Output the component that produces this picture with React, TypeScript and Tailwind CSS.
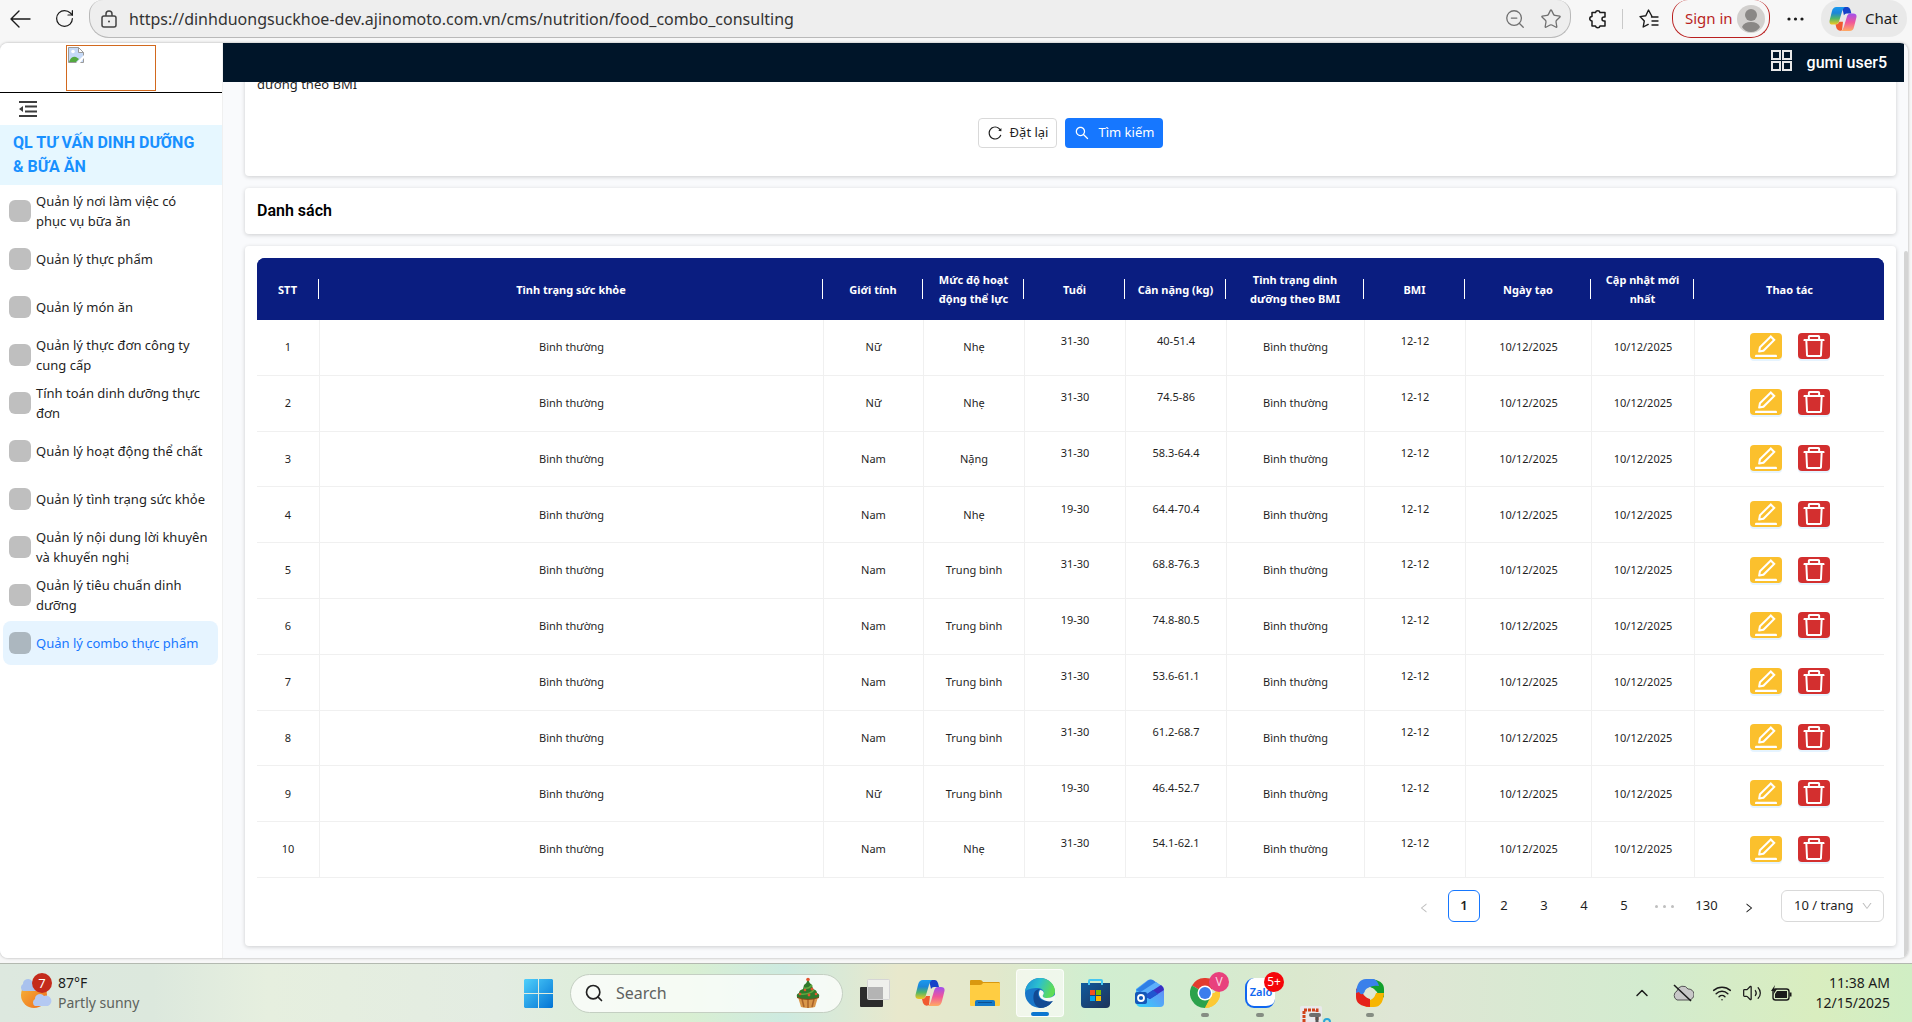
import { useState } from "react";
import type { ReactNode } from "react";
import {
  AiOutlineDelete,
  AiOutlineDown,
  AiOutlineEdit,
  AiOutlineLeft,
  AiOutlineReload,
  AiOutlineRight,
  AiOutlineSearch,
} from "react-icons/ai";
import { ArrowLeft, ChevronUp, RotateCw, Search, Star, Volume2, Wifi, ZoomOut } from "lucide-react";

const menuItems = [
  "Quản lý nơi làm việc có phục vụ bữa ăn",
  "Quản lý thực phẩm",
  "Quản lý món ăn",
  "Quản lý thực đơn công ty cung cấp",
  "Tính toán dinh dưỡng thực đơn",
  "Quản lý hoạt động thể chất",
  "Quản lý tình trạng sức khỏe",
  "Quản lý nội dung lời khuyên và khuyến nghị",
  "Quản lý tiêu chuẩn dinh dưỡng",
  "Quản lý combo thực phẩm",
];

const columns = [
  { title: "STT", width: "w-[63px]" },
  { title: "Tình trạng sức khỏe", width: "" },
  { title: "Giới tính", width: "w-[100px]" },
  { title: "Mức độ hoạt động thể lực", width: "w-[101px]" },
  { title: "Tuổi", width: "w-[101px]" },
  { title: "Cân nặng (kg)", width: "w-[101px]" },
  { title: "Tình trạng dinh dưỡng theo BMI", width: "w-[138px]" },
  { title: "BMI", width: "w-[101px]" },
  { title: "Ngày tạo", width: "w-[126px]" },
  { title: "Cập nhật mới nhất", width: "w-[103px]" },
  { title: "Thao tác", width: "w-[189px]" },
];

const rows = [
  { gender: "Nữ", activity: "Nhẹ", age: "31-30", weight: "40-51.4" },
  { gender: "Nữ", activity: "Nhẹ", age: "31-30", weight: "74.5-86" },
  { gender: "Nam", activity: "Nặng", age: "31-30", weight: "58.3-64.4" },
  { gender: "Nam", activity: "Nhẹ", age: "19-30", weight: "64.4-70.4" },
  { gender: "Nam", activity: "Trung bình", age: "31-30", weight: "68.8-76.3" },
  { gender: "Nam", activity: "Trung bình", age: "19-30", weight: "74.8-80.5" },
  { gender: "Nam", activity: "Trung bình", age: "31-30", weight: "53.6-61.1" },
  { gender: "Nam", activity: "Trung bình", age: "31-30", weight: "61.2-68.7" },
  { gender: "Nữ", activity: "Trung bình", age: "19-30", weight: "46.4-52.7" },
  { gender: "Nam", activity: "Nhẹ", age: "31-30", weight: "54.1-62.1" },
];

const cell = "border-b border-r border-[#f0f0f0] px-1";
// range cells sit a little above the middle of the row
const rangeCell = "border-b border-r border-[#f0f0f0] px-1 pb-3";

function CopilotLogo({ id }: { id: string }) {
  return (
    <svg viewBox="0 0 30 28" className="w-full h-full">
      <defs>
        <linearGradient id={`${id}-a`} x1="0" y1="0" x2="0" y2="1">
          <stop offset="0" stopColor="#1a9af0" />
          <stop offset="0.35" stopColor="#1c86d8" />
          <stop offset="0.65" stopColor="#4fb56a" />
          <stop offset="1" stopColor="#f3c81e" />
        </linearGradient>
        <linearGradient id={`${id}-b`} x1="0" y1="0" x2="0" y2="1">
          <stop offset="0" stopColor="#a050ee" />
          <stop offset="0.5" stopColor="#f0569a" />
          <stop offset="1" stopColor="#ffab62" />
        </linearGradient>
      </defs>
      <path d="M14 1h6q2 0 3 3l1 4h-5q-2 0-3 2z" fill="#1642c8" />
      <path d="M8 1h9q-2 1-3 5l-3 10q-1 4-4 4H4q-5 0-3-6l2-8q1-5 5-5z" fill={`url(#${id}-a)`} />
      <path d="M7 20q3 0 4-3h4l-1 9q-4 2-6-2z" fill="#f15a30" />
      <path d="M22 27h-9q2-1 3-5l3-10q1-4 4-4h3q5 0 3 6l-2 8q-1 5-5 5z" fill={`url(#${id}-b)`} />
    </svg>
  );
}

function BrowserBar() {
  return (
    <div className="flex h-[43px] items-start bg-[#f7f7f7] text-[#1b1b1b]">
      <button aria-label="Back" className="ml-2 flex h-[37px] w-6 items-center justify-center">
        <svg width="21" height="18" viewBox="0 0 21 18" fill="none" stroke="currentColor" strokeWidth="1.400" strokeLinecap="round" strokeLinejoin="round">
          <path d="M20 9H1M9 1 1 9l8 8" />
        </svg>
      </button>
      <button aria-label="Refresh" className="ml-5 flex h-[37px] w-6 items-center justify-center">
        <RotateCw size={21} strokeWidth={1.4} />
      </button>
      <div className="ml-[13px] flex h-[38px] min-w-0 flex-1 items-center rounded-b-[20px] rounded-t-[14px] border border-t-0 border-[#b9b9b9] bg-[#eeeeee] pl-[11px] pr-2">
        <svg width="16" height="18" viewBox="0 0 16 18" fill="none" stroke="#444" strokeWidth="1.500" className="shrink-0">
          <rect x="1" y="6" width="14" height="11" rx="2" />
          <path d="M5 6V4a3 3 0 0 1 6 0v2" />
          <circle cx="8" cy="11.500" r="1" fill="#444" stroke="none" />
        </svg>
        <input
          aria-label="Address"
          className="ml-3 min-w-0 flex-1 bg-transparent text-[16px] leading-5 text-[#333] outline-none"
          defaultValue="https://dinhduongsuckhoe-dev.ajinomoto.com.vn/cms/nutrition/food_combo_consulting"
        />
        <button aria-label="Zoom out" className="text-[#707070]"><ZoomOut size={22} strokeWidth={1.4} /></button>
        <button aria-label="Favourite" className="ml-[14px] text-[#707070]"><Star size={22} strokeWidth={1.4} /></button>
      </div>
      <div className="flex h-[37px] shrink-0 items-center">
        <button aria-label="Extensions" className="ml-[17px]">
          <svg width="20" height="20" viewBox="0 0 20 20" fill="none" stroke="currentColor" strokeWidth="1.5" strokeLinejoin="round">
            <path d="M4 3.500h3.500a2.300 2.300 0 0 1 4.500 0H17v4.500h-1a2 2 0 0 0 0 4h1v5H12a2.300 2.300 0 0 1-4.500 0H4v-5a2.200 2.200 0 0 1 0-4.500z" />
          </svg>
        </button>
        <span className="ml-[14px] h-5 w-px bg-[#c9c9c9]" />
        <button aria-label="Favourites" className="ml-4">
          <svg width="20" height="20" viewBox="0 0 20 20" fill="none" stroke="currentColor" strokeWidth="1.400" strokeLinejoin="round" strokeLinecap="round">
            <path d="M13 7.500 9.500 1 6.800 6.800 1 7.600l4.300 4.300L4.200 18l5-2.600M12.500 8H19M13 12h6M13 16h6" />
          </svg>
        </button>
        <button className="ml-[13px] flex h-[38px] w-[98px] items-center justify-between self-start rounded-b-[19px] rounded-t-[16px] border border-t-0 border-[#b91f1f] pl-3 pr-1 text-[15px] text-[#b91f1f]">
          Sign in
          <svg width="28" height="28" viewBox="0 0 28 28">
            <circle cx="14" cy="14" r="14" fill="#d2d0ce" />
            <circle cx="14" cy="10" r="6" fill="#8a8886" />
            <path d="M5 22q2-5 9-5t9 5q-3 5-9 5t-9-5z" fill="#8a8886" />
          </svg>
        </button>
        <button aria-label="More" className="ml-[17px]">
          <svg width="17" height="4" viewBox="0 0 17 4" fill="currentColor">
            <circle cx="2" cy="2" r="1.600" /><circle cx="8.500" cy="2" r="1.600" /><circle cx="15" cy="2" r="1.600" />
          </svg>
        </button>
        <button className="ml-[17px] mr-[5px] flex h-[37px] w-[86px] items-center gap-2 rounded-[18px] bg-[#e9e9e9] pl-2 text-[15px]">
          <span className="h-[26px] w-7"><CopilotLogo id="bar" /></span>
          Chat
        </button>
      </div>
    </div>
  );
}

function Sidebar() {
  const [active, setActive] = useState(9);
  return (
    <aside className="flex w-[223px] shrink-0 flex-col border-r border-[#f0f0f0] bg-white">
      <div className="flex h-[50px] justify-center border-b border-black pt-[2px]">
        <div className="h-[46px] w-[90px] border border-[#d2691e] p-px">
          <svg width="16" height="16" viewBox="0 0 16 16" className="block">
            <path d="M.5.5h10l5 5v10H.5z" fill="#c5d9f7" stroke="#9a9a9a" />
            <path d="M10.500.5v5h5z" fill="#fff" stroke="#9a9a9a" />
            <circle cx="5" cy="4.500" r="1.800" fill="#fff" />
            <path d="M1 15q2-6 7-5l3 2-3 3z" fill="#53a93f" />
            <path d="m8 16 8-8v3l-4 5z" fill="#fff" />
          </svg>
        </div>
      </div>
      <div className="flex h-8 items-center pl-[19px]">
        <button aria-label="Toggle menu">
          <svg width="18" height="16" viewBox="0 0 18 16" fill="#3d3d3d">
            <path d="M0 0h18v2H0zM6 4.600h12v2H6zM6 9.400h12v2H6zM0 14h18v2H0zM0 8l4-3v6z" />
          </svg>
        </button>
      </div>
      <h1 className="bg-[#e6f7ff] py-[6px] pl-[13px] pr-5 font-[Roboto,sans-serif] text-[16px] font-bold leading-6 text-[#1890ff]">
        QL TƯ VẤN DINH DƯỠNG &amp; BỮA ĂN
      </h1>
      <nav className="flex flex-col gap-1 py-1 pl-[3px] pr-1">
        {menuItems.map((label, i) => (
          <a
            key={label}
            href="#"
            onClick={() => setActive(i)}
            className={`flex h-11 items-center gap-[5px] rounded-lg pl-[6px] pr-[9px] text-[13px] leading-5 ${i === active ? "bg-[#e6f4ff] text-[#1677ff]" : "text-[#1f1f1f]"}`}
          >
            <span className="h-[22px] w-[22px] shrink-0 rounded-md bg-black/25" />
            <span className="flex-1">{label}</span>
          </a>
        ))}
      </nav>
    </aside>
  );
}

function FoodTable() {
  return (
    <table className="h-[620px] w-full table-fixed border-separate border-spacing-0 text-center text-[11px] text-[#1f1f1f]">
      <thead>
        <tr className="h-[62px] bg-[#0a1d80] text-white">
          {columns.map((c, i) => (
            <th key={c.title} scope="col" className={`p-0 font-bold leading-[19px] ${c.width} ${i === 0 ? "rounded-tl-lg" : ""} ${i === columns.length - 1 ? "rounded-tr-lg" : ""} bg-[#0a1d80]`}>
              <div className={`flex h-5 items-center justify-center px-2 ${i < columns.length - 1 ? "border-r border-white mr-px" : ""}`}>
                <span>{c.title}</span>
              </div>
            </th>
          ))}
        </tr>
      </thead>
      <tbody>
        {rows.map((r, i) => (
          <tr key={i} className="h-[55px]">
            <td className={cell}>{i + 1}</td>
            <td className={cell}>Bình thường</td>
            <td className={cell}>{r.gender}</td>
            <td className={cell}>{r.activity}</td>
            <td className={rangeCell}>{r.age}</td>
            <td className={rangeCell}>{r.weight}</td>
            <td className={cell}>Bình thường</td>
            <td className={rangeCell}>12-12</td>
            <td className={cell}>10/12/2025</td>
            <td className={cell}>10/12/2025</td>
            <td className="border-b border-[#f0f0f0] pb-[2px]">
              <div className="flex justify-center gap-4 text-white">
                <button aria-label="Sửa" className="flex h-[26px] w-8 items-center justify-center rounded bg-[#fbc02d] shadow-[0_2px_0_rgba(5,145,255,0.1)]">
                  <AiOutlineEdit size={28} />
                </button>
                <button aria-label="Xóa" className="flex h-[26px] w-8 items-center justify-center rounded bg-[#d32f2f] shadow-[0_2px_0_rgba(5,145,255,0.1)]">
                  <AiOutlineDelete size={28} />
                </button>
              </div>
            </td>
          </tr>
        ))}
      </tbody>
    </table>
  );
}

function Pagination() {
  const [page, setPage] = useState(1);
  return (
    <div className="mt-3 flex items-center justify-end gap-2 text-[13px] text-[#1f1f1f]">
      <button aria-label="Trang trước" className="flex h-8 w-8 items-center justify-center pt-1 text-[#bfbfbf]"><AiOutlineLeft size={12} /></button>
      {[1, 2, 3, 4, 5].map((n) => (
        <button
          key={n}
          onClick={() => setPage(n)}
          className={`h-8 w-8 rounded-md border ${n === page ? "border-[#1677ff] font-semibold" : "border-transparent"}`}
        >
          {n}
        </button>
      ))}
      <span className="flex h-8 w-8 items-center justify-center gap-[5px]">
        <i className="h-[3px] w-[3px] rounded-full bg-[#bfbfbf]" />
        <i className="h-[3px] w-[3px] rounded-full bg-[#bfbfbf]" />
        <i className="h-[3px] w-[3px] rounded-full bg-[#bfbfbf]" />
      </span>
      <button className="h-8 w-[37px]">130</button>
      <button aria-label="Trang sau" className="flex h-8 w-8 items-center justify-center pt-1"><AiOutlineRight size={12} /></button>
      <div className="relative ml-2">
        <select aria-label="Số dòng mỗi trang" className="h-8 w-[103px] appearance-none rounded-md border border-[#d9d9d9] bg-white pl-3 text-[13px]">
          <option>10 / trang</option>
          <option>20 / trang</option>
          <option>50 / trang</option>
        </select>
        <AiOutlineDown size={12} className="pointer-events-none absolute right-[11px] top-[10px] text-[#bfbfbf]" />
      </div>
    </div>
  );
}

function Tile({ label, children, bar, on }: { label: string; children: ReactNode; bar?: string; on?: boolean }) {
  return (
    <button aria-label={label} className={`relative flex h-12 w-12 items-center justify-center rounded ${on ? "border border-white/70 bg-white/60" : ""}`}>
      {children}
      {bar && <span className={`absolute bottom-0 rounded-full ${bar}`} />}
    </button>
  );
}

const idleBar = "h-1 w-2 bg-[#858d82]";

function Taskbar() {
  return (
    <footer className="grid h-[59px] grid-cols-[1fr_auto_1fr] items-center border-t border-[#b3b9b0] bg-[linear-gradient(90deg,#dde8df_0%,#dce8dd_8%,#e6efdf_14%,#e3ece2_26%,#d9efd2_36%,#cdeae0_41%,#e8e8cc_47%,#e2e8cc_52%,#d1eed0_57%,#d3ecd0_62%,#dbe8ce_68%,#dfe6d5_73%,#d3ebcf_86%,#d9edbf_95%,#d0eec4_100%)] pr-1">
      <button className="flex items-center gap-[6px] pl-[19px] text-left">
        <span className="relative h-10 w-[33px]">
          <svg width="33" height="40" viewBox="0 0 33 40">
            <defs>
              <linearGradient id="sun" x1="0" y1="0" x2="1" y2="1">
                <stop offset="0" stopColor="#f6b93a" />
                <stop offset="1" stopColor="#ef6a1c" />
              </linearGradient>
            </defs>
            <circle cx="15" cy="22" r="13" fill="url(#sun)" />
            <path d="M4 18a4 4 0 0 1 0-7 5 5 0 0 1 9-3 5 5 0 0 1 4 10z" fill="#a9c2ee" />
            <path d="M16 33a4 4 0 0 1 0-7 5 5 0 0 1 9-3 5 5 0 0 1 4 10z" fill="#b4c9f2" />
          </svg>
          <span className="absolute right-0 top-0 flex h-5 w-5 items-center justify-center rounded-full bg-[#c42b1c] text-[13px] leading-5 text-white">7</span>
        </span>
        <span className="text-[14px] leading-5">
          <span className="block text-[#1b1b1b]">87°F</span>
          <span className="block text-[#5c625c]">Partly sunny</span>
        </span>
      </button>

      <div className="flex items-center gap-[7px]">
        <Tile label="Start">
          <svg width="29" height="29" viewBox="0 0 29 29">
            <defs>
              <linearGradient id="win" x1="0" y1="0" x2="1" y2="1">
                <stop offset="0" stopColor="#4fd0fb" />
                <stop offset="1" stopColor="#0273d4" />
              </linearGradient>
            </defs>
            <path d="M1 0h13v14H0V1zM15 0h13l1 1v13H15zM0 15h14v14H1l-1-1zM15 15h14v13l-1 1H15z" fill="url(#win)" />
          </svg>
        </Tile>
        <div className="mx-[1px] flex h-[39px] w-[273px] items-center rounded-full border border-[#c4cfc2] bg-white/75 pl-[13px] pr-[22px]">
          <Search size={20} strokeWidth={2} className="shrink-0 text-[#222]" />
          <input aria-label="Search" placeholder="Search" className="ml-3 min-w-0 flex-1 bg-transparent text-[16px] leading-5 outline-none placeholder:text-[#5f625f]" />
          <svg width="24" height="32" viewBox="0 0 24 32" className="shrink-0">
            <path d="M2 20h20l-3 10q-7 2-14 0z" fill="#d9974a" />
            <path d="M6 22l2 8M12 22v9M18 22l-2 8" stroke="#a9642a" strokeWidth="1.500" />
            <path d="M1 19h22v2q-11 4-22 0z" fill="#8a4a1c" />
            <path d="M12 2q-1 4-4 6l-1 4q-4 1-4 4-3 1-2 4 11 4 22 0 1-3-2-4 0-3-4-4l-1-4q-3-2-4-6z" fill="#2f7a2c" />
            <path d="M8 11q5 1 8-3M4 17q9 1 14-4" stroke="#62a83f" strokeWidth="1.500" fill="none" />
            <g fill="#e2542e">
              <circle cx="12" cy="2.500" r="1.800" /><circle cx="9" cy="13" r="1.300" /><circle cx="16" cy="12" r="1.500" /><circle cx="4" cy="17" r="1.300" /><circle cx="13" cy="18" r="1.400" /><circle cx="20" cy="17" r="1.300" />
            </g>
          </svg>
        </div>
        <Tile label="Task view">
          <svg width="30" height="29" viewBox="0 0 30 29">
            <rect x="0" y="8" width="23" height="20" rx="1" fill="#2b2b2b" />
            <rect x="7.500" y="0.500" width="22" height="20" rx="1" fill="#f1f1f1" fillOpacity="0.850" stroke="#d5d5d5" />
            <path d="M8 8h15v12H8z" fill="#b4b4b4" />
          </svg>
        </Tile>
        <Tile label="Copilot"><span className="h-7 w-[30px]"><CopilotLogo id="task" /></span></Tile>
        <Tile label="File Explorer">
          <svg width="30" height="27" viewBox="0 0 30 27">
            <path d="M0 1q0-1 1-1h9q2 0 3 2h16q1 0 1 2v6H0z" fill="#d9980f" />
            <path d="M0 5h10q2 0 3-2h16q1 0 1 1v21q0 1-1 1H1q-1 0-1-1z" fill="#ffcd42" />
            <path d="M5 26v-4q0-2 2-2h16q2 0 2 2v4z" fill="#1478c8" />
            <path d="M8 22.500h14" stroke="#0b4f91" />
          </svg>
        </Tile>
        <Tile label="Edge" on bar="h-1 w-[18px] bg-[#0a76d0]">
          <svg width="30" height="30" viewBox="0 0 30 30">
            <defs>
              <linearGradient id="edge" x1="0" y1="0" x2="1" y2="0.300">
                <stop offset="0" stopColor="#1b8fd6" />
                <stop offset="0.500" stopColor="#2bbfd0" />
                <stop offset="1" stopColor="#5fdc56" />
              </linearGradient>
            </defs>
            <circle cx="15" cy="15" r="15" fill="#1876c8" />
            <path d="M0 14C1 5 8 0 15 0c9 0 15 7 15 13 0 5-4 7-8 7-3 0-5-1-4-3 2-3 0-7-5-7C7 10 2 11 0 14z" fill="url(#edge)" />
            <path d="M9 15c1-3 4-4 6-4-4 3-2 11 5 12 4 0 6-1 7-1 1 0 1 1 0 2-3 4-7 6-12 6-5-1-8-8-6-15z" fill="#114a93" />
            <path d="M15 12c3 0 5 3 3 5-1 2 1 3 4 3 3 0 6-1 8-3v5c-3 2-9 2-13-1-3-2-4-6-2-9z" fill="#f5faf5" />
          </svg>
        </Tile>
        <Tile label="Store">
          <svg width="29" height="29" viewBox="0 0 29 29">
            <defs>
              <linearGradient id="bag" x1="0" y1="0" x2="1" y2="1">
                <stop offset="0" stopColor="#0f5a9e" />
                <stop offset="1" stopColor="#1f3358" />
              </linearGradient>
            </defs>
            <path d="M0 4h29v21q0 4-4 4H4q-4 0-4-4z" fill="url(#bag)" />
            <path d="M8 6V2q0-1 1-1h11q1 0 1 1v4" fill="none" stroke="#45c6f3" strokeWidth="2" />
            <path d="M9 11h5v5H9z" fill="#f25022" /><path d="M15 11h5v5h-5z" fill="#7fba00" />
            <path d="M9 17h5v5H9z" fill="#00a4ef" /><path d="M15 17h5v5h-5z" fill="#ffb900" />
          </svg>
        </Tile>
        <Tile label="Outlook">
          <svg width="30" height="29" viewBox="0 0 30 29">
            <defs>
              <linearGradient id="mail" x1="0" y1="1" x2="1" y2="0">
                <stop offset="0" stopColor="#35d4fa" />
                <stop offset="1" stopColor="#6f7cf5" />
              </linearGradient>
            </defs>
            <path d="M1 10 13 1q2-1 4 0l11 7q1 1 1 2v14q0 4-4 4H6q-4 0-5-4z" fill="url(#mail)" />
            <path d="M1 11 14 1q2-1 4 0l4 3L6 14z" fill="#2f7fe6" />
            <path d="M4 14 21 3l6 4-16 10z" fill="#5cb0fb" />
            <path d="m9 17 17-11q3 2 3 5L15 20z" fill="#3a2fc0" />
            <path d="m9 17 9-6 5 4-8 5z" fill="#1f55cf" />
            <rect x="0" y="13" width="12" height="12" rx="2" fill="#1457b8" />
            <circle cx="6" cy="19" r="3" fill="none" stroke="#fff" strokeWidth="1.800" />
          </svg>
        </Tile>
        <Tile label="Chrome" bar={idleBar}>
          <svg width="30" height="30" viewBox="0 0 30 30">
            <path d="M15 15 2 7.500a15 15 0 0 1 26 0z" fill="#e33b2e" />
            <path d="M15 15 2 7.500A15 15 0 0 0 15 30z" fill="#2ba24c" />
            <path d="M15 15h13V7.500A15 15 0 0 1 15 30z" fill="#fcc934" />
            <path d="m15 30 6-12-6-3-7 3z" fill="#2ba24c" /><path d="m15 30 7-12 7-9a15 15 0 0 1-14 21z" fill="#fcc934" />
            <circle cx="15" cy="15" r="7.500" fill="#fff" />
            <circle cx="15" cy="15" r="6" fill="#3b7ded" />
          </svg>
          <span className="absolute right-0 top-[3px] h-5 w-5 rounded-full bg-[#e8417d] text-[12px] leading-5 text-[#fbd5e3]">V</span>
        </Tile>
        <Tile label="Zalo" bar={idleBar}>
          <span className="flex h-[30px] w-[30px] items-center justify-center rounded-[9px] border-b-2 border-l-2 border-[#0f66f0] bg-white text-[11px] font-semibold text-[#0f66f0]">Zalo</span>
          <span className="absolute right-0 top-[3px] h-5 w-5 rounded-full bg-[#f5060a] text-[12px] leading-5 text-white">5+</span>
        </Tile>
        <Tile label="Snipping Tool" bar="h-1 w-3 bg-[#6e6e6e]">
          <svg width="31" height="16" viewBox="0 0 31 16" className="absolute left-[9px] top-[37px]">
            <path d="M0 2q0-2 2-2h18q2 0 2 2v14H0z" fill="#e9e9ec" />
            <path d="M4 16V4h13v10" fill="none" stroke="#d0421b" strokeWidth="3" strokeDasharray="3 1" />
            <path d="M17 7v9" stroke="#555" strokeWidth="3" />
            <circle cx="27" cy="16" r="3" fill="none" stroke="#2aa5d8" strokeWidth="2" />
          </svg>
        </Tile>
        <Tile label="Capture" bar={idleBar}>
          <svg width="28" height="28" viewBox="0 0 28 28">
            <path d="M14 0Q28 1 28 10v8q-2 2-6 2 1-9-8-12z" fill="#12a02c" />
            <path d="M28 14q-1 14-10 14h-8q-2-2-2-6 9 1 12-8z" fill="#f7b500" />
            <path d="M14 28Q0 27 0 18v-8q2-2 6-2-1 9 8 12z" fill="#e5231b" />
            <path d="M0 14Q1 0 10 0h8q4 2 5 7-10-2-15 7-3 3-5-1z" fill="#3a80ea" />
            <circle cx="14" cy="14" r="5.500" fill="#dfe8d4" />
          </svg>
        </Tile>
      </div>

      <div className="flex items-center justify-end pr-[18px] text-[#1b1b1b]">
        <ChevronUp size={20} strokeWidth={1.800} />
        <svg width="22" height="18" viewBox="0 0 22 18" className="ml-5">
          <path d="M5 16a5 5 0 0 1 0-9 6 6 0 0 1 11-2 5 5 0 0 1 1 11z" fill="#c8c8c8" stroke="#555" />
          <path d="m2 1 17 16" stroke="#1b1b1b" strokeWidth="1.600" />
        </svg>
        <Wifi size={20} strokeWidth={1.800} className="ml-[18px]" />
        <Volume2 size={20} strokeWidth={1.500} className="ml-[10px]" />
        <svg width="21" height="17" viewBox="0 0 21 17" className="ml-[9px]">
          <rect x="2" y="4" width="16" height="11" rx="2.500" fill="none" stroke="#1b1b1b" strokeWidth="1.400" />
          <path d="M6 6h10v7H4V9zM18.500 7.500h2v4h-2z" fill="#1b1b1b" />
          <path d="M4 0 0 6h3L2 10l4-6H3z" fill="#1b1b1b" />
        </svg>
        <span className="ml-6 text-right text-[14px] leading-5">
          <span className="block">11:38 AM</span>
          <span className="block">12/15/2025</span>
        </span>
      </div>
    </footer>
  );
}

export default function App() {
  return (
    <div className="flex min-h-screen flex-col bg-[#f7f7f7] font-['Noto_Sans',sans-serif]">
      <BrowserBar />
      <div className="mb-[5px] mr-1 flex flex-1 overflow-hidden rounded-lg bg-[#f9fafc] shadow-[0_0_3px_rgba(0,0,0,0.3)]">
        <Sidebar />
        <div className="flex min-w-0 flex-1 flex-col">
          <header className="mr-1 flex h-[39px] items-center justify-end gap-[15px] bg-[#001529] pr-[17px] font-[Roboto,sans-serif] text-[16px] text-white">
            <svg width="21" height="21" viewBox="0 0 21 21" fill="none" stroke="#e8e8e8" strokeWidth="2" className="mb-1">
              <path d="M1 1h8v8H1zM12 1h8v8h-8zM1 12h8v8H1zM12 12h8v8h-8z" />
            </svg>
            <span className="font-medium">gumi user5</span>
          </header>
          <div className="flex flex-1 overflow-hidden">
            <main className="flex min-w-0 flex-1 flex-col gap-3 pb-3 pl-[22px] pr-2">
              <section className="-mt-2 rounded bg-white px-3 pb-7 shadow-[0_1px_4px_rgba(0,0,0,0.18)]">
                <p className="text-[13px] leading-5 text-[#1f1f1f]">dưỡng theo BMI</p>
                <div className="mt-6 flex justify-center gap-2 text-[13px]">
                  <button className="flex h-[30px] items-center gap-[7px] rounded border border-[#d9d9d9] bg-white px-2 text-[#1f1f1f]">
                    <AiOutlineReload size={16} />
                    Đặt lại
                  </button>
                  <button className="flex h-[30px] items-center gap-2 rounded bg-[#1677ff] px-[9px] text-white">
                    <AiOutlineSearch size={16} />
                    Tìm kiếm
                  </button>
                </div>
              </section>
              <section className="rounded bg-white px-3 py-[11px] shadow-[0_1px_4px_rgba(0,0,0,0.18)]">
                <h2 className="font-[Roboto,sans-serif] text-[16px] font-semibold leading-6 text-black">Danh sách</h2>
              </section>
              <section className="rounded bg-white px-3 pb-6 pt-3 shadow-[0_1px_4px_rgba(0,0,0,0.18)]">
                <FoodTable />
                <Pagination />
              </section>
            </main>
            <div className="flex w-1 flex-col pt-[169px]">
              <div className="flex-1 rounded-t bg-[#d4d4d4]" />
            </div>
          </div>
        </div>
      </div>
      <Taskbar />
    </div>
  );
}
